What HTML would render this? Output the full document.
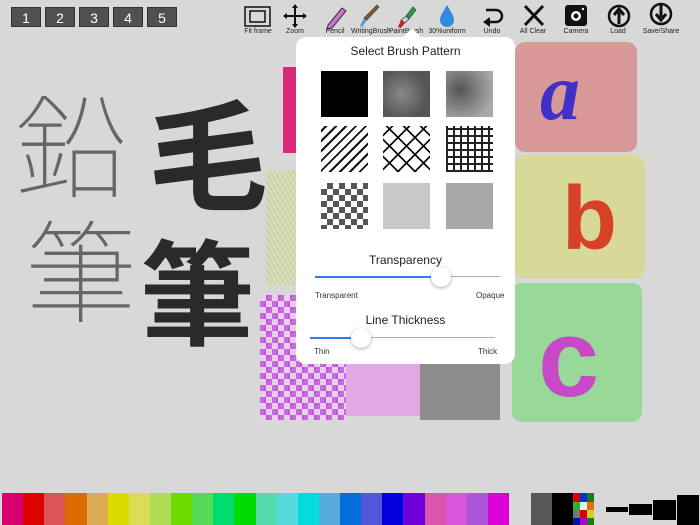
<!DOCTYPE html>
<html><head><meta charset="utf-8"><style>
*{margin:0;padding:0;box-sizing:border-box}
body{width:700px;height:525px;background:#d8d8d8;position:relative;overflow:hidden;font-family:"Liberation Sans",sans-serif}
.a{position:absolute}
.nb{position:absolute;top:7px;width:30px;height:20px;background:#505050;color:#fff;font-size:14px;text-align:center;line-height:20px;border:1px solid #333}
.lbl{position:absolute;top:28px;font-size:7px;color:#222;width:50px;text-align:center}
.pal{position:absolute;left:2px;top:493px;width:507px;height:32px;display:flex}
.pal div{flex:1;height:32px}
.sw{position:absolute;top:493px;height:32px;width:21px}
.pt{position:absolute;width:47px;height:46px}
.cjk{font-family:"Liberation Sans","Noto Sans CJK JP",sans-serif;position:absolute;line-height:1}
</style></head><body>
<div class="nb" style="left:11px">1</div><div class="nb" style="left:45px">2</div><div class="nb" style="left:79px">3</div><div class="nb" style="left:113px">4</div><div class="nb" style="left:147px">5</div>

<svg class="a" style="left:240px;top:0" width="460" height="30" viewBox="240 0 460 30">
<rect x="245" y="7" width="25" height="19" fill="none" stroke="#111" stroke-width="1.5"/><rect x="250" y="11" width="15" height="11" fill="none" stroke="#111" stroke-width="1.5"/>
<path d="M295 5V27M284 16H306" stroke="#111" stroke-width="2"/><path d="M295 4l-3 4h6zM295 28l-3-4h6zM283 16l4-3v6zM307 16l-4-3v6z" fill="#111"/>
<path d="M328 25l14-17 4 3-14 17-5 1z" fill="#d070d0" stroke="#333" stroke-width="1"/>
<path d="M360 26l4-8 3 2-5 7z" fill="#4aa0d0"/><path d="M364 18l13-13 2 2-12 13z" fill="#8a5a20" stroke="#333" stroke-width=".6"/>
<path d="M398 27l3-7 4 3-4 5z" fill="#d02020"/><path d="M401 20l5-4 3 3-4 4z" fill="#ccc" stroke="#333" stroke-width=".6"/><path d="M406 16l7-9 3 3-7 9z" fill="#20a040" stroke="#333" stroke-width=".6"/>
<path d="M447 5c-3 6-7 10-7 15a7 7 0 0 0 14 0c0-5-4-9-7-15z" fill="#2f8ae0"/>
<path d="M486 10h10a6 6 0 0 1 0 12h-6" fill="none" stroke="#111" stroke-width="2.5"/><path d="M483 22l7-5v10z" fill="#111"/>
<path d="M525 6l18 19M543 6l-18 19" stroke="#111" stroke-width="3"/>
<rect x="565" y="5" width="22" height="21" rx="3" fill="#111"/><circle cx="576" cy="16" r="5" fill="#fff"/><circle cx="576" cy="16" r="2.5" fill="#111"/><circle cx="583" cy="9" r="1.2" fill="#fff"/>
<circle cx="619" cy="16" r="10" fill="none" stroke="#111" stroke-width="2.5"/><path d="M619 24V12M614 15l5-6 5 6" fill="none" stroke="#111" stroke-width="3"/>
<circle cx="661" cy="14" r="10" fill="none" stroke="#111" stroke-width="2.5"/><path d="M661 5V17M656 14l5 6 5-6" fill="none" stroke="#111" stroke-width="3"/>
</svg>
<div class="lbl" style="left:233px">Fit frame</div><div class="lbl" style="left:270px">Zoom</div><div class="lbl" style="left:310px">Pencil</div><div class="lbl" style="left:346px">WritingBrush</div><div class="lbl" style="left:381px">PaintBrush</div><div class="lbl" style="left:422px">30%uniform</div><div class="lbl" style="left:467px">Undo</div><div class="lbl" style="left:508px">All Clear</div><div class="lbl" style="left:551px">Camera</div><div class="lbl" style="left:593px">Load</div><div class="lbl" style="left:636px">Save/Share</div>

<div class="cjk" style="left:15px;top:95px;font-size:112px;color:#666;font-weight:100">鉛</div>
<div class="cjk" style="left:25px;top:220px;font-size:112px;color:#666;font-weight:100">筆</div>
<div class="cjk" style="left:148px;top:100px;font-size:120px;color:#2a2a2a;font-weight:bold">毛</div>
<div class="cjk" style="left:140px;top:240px;font-size:115px;color:#2a2a2a;font-weight:bold">筆</div>
<div class="a" style="left:283px;top:67px;width:15px;height:86px;background:#d82878"></div>
<div class="a" style="left:266px;top:170px;width:32px;height:115px;background:repeating-linear-gradient(60deg,#b8e040 0 1px,transparent 1px 4px)"></div>
<div class="a" style="left:260px;top:295px;width:88px;height:125px;background:repeating-conic-gradient(#c050d8 0 25deg,#c868e0 25deg 90deg,#e8d0ec 90deg 180deg) 0 0/12px 12px"></div>
<div class="a" style="left:346px;top:363px;width:76px;height:53px;background:#e0a8e4"></div>
<div class="a" style="left:420px;top:363px;width:80px;height:57px;background:#8c8c8c"></div>
<div class="a" style="left:515px;top:42px;width:122px;height:110px;background:#d89898;border-radius:10px"></div>
<div class="a" style="left:515px;top:155px;width:130px;height:123px;background:#d8d898;border-radius:10px"></div>
<div class="a" style="left:512px;top:283px;width:130px;height:139px;background:#98d898;border-radius:10px"></div>
<div class="a" style="left:540px;top:48px;font-size:80px;color:#4030c8;font-family:'Liberation Serif',serif;font-style:italic;font-weight:bold">a</div>
<div class="a" style="left:562px;top:168px;font-size:90px;color:#d84028;font-family:'Liberation Sans',sans-serif;font-weight:bold">b</div>
<div class="a" style="left:538px;top:295px;font-size:110px;color:#c848c8;font-family:'Liberation Sans',sans-serif;font-weight:bold">c</div>

<div class="a" style="left:405px;top:31px;width:14px;height:14px;background:#fff;transform:rotate(45deg)"></div>
<div class="a" style="left:296px;top:37px;width:219px;height:327px;background:#fff;border-radius:10px"></div>
<div class="a" style="left:296px;top:44px;width:219px;text-align:center;font-size:12px;color:#222">Select Brush Pattern</div>
<div class="pt" style="left:321px;top:71px;background:#000"></div>
<div class="pt" style="left:383px;top:71px;background:radial-gradient(circle at 40% 50%,#888,#555 70%)"></div>
<div class="pt" style="left:446px;top:71px;background:radial-gradient(circle at 30% 40%,#555,#aaa 80%)"></div>
<div class="pt" style="left:321px;top:126px;background:repeating-linear-gradient(-45deg,#fff 0 5px,#111 5px 7px)"></div>
<div class="pt" style="left:383px;top:126px;background:repeating-linear-gradient(-45deg,transparent 0 10px,#111 10px 12px),repeating-linear-gradient(45deg,#fff 0 10px,#111 10px 12px)"></div>
<div class="pt" style="left:446px;top:126px;background:repeating-linear-gradient(90deg,#222 0 2px,transparent 2px 7px),repeating-linear-gradient(0deg,#222 0 2px,#fff 2px 7px)"></div>
<div class="pt" style="left:321px;top:183px;background:repeating-conic-gradient(#555 0 25%,#fff 0 50%) 0 0/12px 12px"></div>
<div class="pt" style="left:383px;top:183px;background:#c8c8c8"></div>
<div class="pt" style="left:446px;top:183px;background:#a8a8a8"></div>
<div class="a" style="left:296px;top:253px;width:219px;text-align:center;font-size:12px;color:#222">Transparency</div>
<div class="a" style="left:315px;top:276px;width:126px;height:2px;background:#2f7cf6"></div>
<div class="a" style="left:441px;top:276px;width:59px;height:1px;background:#b0b0b0"></div>
<div class="a" style="left:431px;top:267px;width:20px;height:20px;border-radius:50%;background:#fff;box-shadow:0 1px 3px rgba(0,0,0,.35)"></div>
<div class="a" style="left:315px;top:291px;font-size:8px;color:#333">Transparent</div>
<div class="a" style="left:476px;top:291px;font-size:8px;color:#333">Opaque</div>
<div class="a" style="left:296px;top:313px;width:219px;text-align:center;font-size:12px;color:#222">Line Thickness</div>
<div class="a" style="left:310px;top:337px;width:51px;height:2px;background:#2f7cf6"></div>
<div class="a" style="left:361px;top:337px;width:134px;height:1px;background:#b0b0b0"></div>
<div class="a" style="left:351px;top:328px;width:20px;height:20px;border-radius:50%;background:#fff;box-shadow:0 1px 3px rgba(0,0,0,.35)"></div>
<div class="a" style="left:314px;top:347px;font-size:8px;color:#333">Thin</div>
<div class="a" style="left:478px;top:347px;font-size:8px;color:#333">Thick</div>

<div class="pal"><div style="background:#d8006e"></div><div style="background:#dd0000"></div><div style="background:#db5555"></div><div style="background:#dc6c00"></div><div style="background:#dbab55"></div><div style="background:#dbdb00"></div><div style="background:#dbdb55"></div><div style="background:#b0db55"></div><div style="background:#6edb00"></div><div style="background:#55db55"></div><div style="background:#00db6e"></div><div style="background:#00db00"></div><div style="background:#55dbab"></div><div style="background:#55dbdb"></div><div style="background:#00dbdb"></div><div style="background:#55abdb"></div><div style="background:#006edb"></div><div style="background:#5555db"></div><div style="background:#0000db"></div><div style="background:#6e00db"></div><div style="background:#db55ab"></div><div style="background:#db55db"></div><div style="background:#ab55db"></div><div style="background:#db00db"></div></div>
<div class="sw" style="left:531px;background:#575757"></div><div class="sw" style="left:552px;background:#000"></div>
<svg class="a" style="left:573px;top:493px" width="21" height="32"><rect width="7" height="9" fill="#d00"/><rect x="7" width="7" height="9" fill="#0030d0"/><rect x="14" width="7" height="9" fill="#108010"/><rect y="9" width="7" height="8" fill="#30b030"/><rect x="7" y="9" width="7" height="8" fill="#eee"/><rect x="14" y="9" width="7" height="8" fill="#e07010"/><rect y="17" width="7" height="8" fill="#777"/><rect x="7" y="17" width="7" height="8" fill="#d00"/><rect x="14" y="17" width="7" height="8" fill="#d0d020"/><rect y="25" width="7" height="7" fill="#0010b0"/><rect x="7" y="25" width="7" height="7" fill="#b000d0"/><rect x="14" y="25" width="7" height="7" fill="#108010"/></svg>
<div class="a" style="left:606px;top:507px;width:22px;height:5px;background:#000"></div>
<div class="a" style="left:629px;top:504px;width:23px;height:11px;background:#000"></div>
<div class="a" style="left:653px;top:500px;width:23px;height:20px;background:#000"></div>
<div class="a" style="left:677px;top:495px;width:22px;height:30px;background:#000"></div>
</body></html>
